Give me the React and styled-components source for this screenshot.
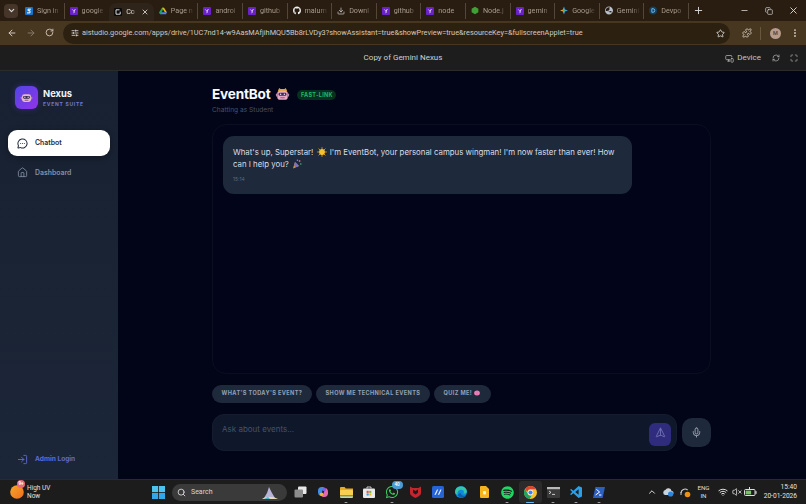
import React from 'react';
import styled, { createGlobalStyle } from 'styled-components';
import {
  ChevronDown, X, Plus, Minus, ArrowLeft, ArrowRight, RotateCw, Star, Puzzle, MoreVertical,
  SlidersHorizontal, MessageCircleMore, House, Mic, Send, Search, ChevronUp, Wifi, VolumeX, LogIn, Download,
  MonitorSmartphone, Maximize, RefreshCw, Copy
} from 'lucide-react';
import { FaGithub, FaSpotify, FaWhatsapp, FaGlobeAsia } from 'react-icons/fa';

const Global = createGlobalStyle`
  html, body { margin: 0; padding: 0; background: #020417; }
  #root { width: 806px; height: 504px; overflow: hidden; }
  * { box-sizing: border-box; }
`;

const Page = styled.div`
  width: 806px; height: 504px; display: flex; flex-direction: column;
  font-family: Inter, "Liberation Sans", sans-serif; overflow: hidden;
`;

/* ---------- browser chrome ---------- */
const TabStrip = styled.div`
  height: 21px; background: #291c10; display: flex; align-items: center; padding-left: 4px; flex: none;
`;
const TabMenu = styled.div`
  width: 14px; height: 14px; border-radius: 4px; background: #46362a; color: #ddd; margin-right: 2px;
  display: flex; align-items: center; justify-content: center; flex: none;
`;
const Tab = styled.div`
  width: 44.6px; height: ${p => (p.$active ? '18px' : '16px')}; align-self: ${p => (p.$active ? 'flex-end' : 'center')};
  display: flex; align-items: center; gap: 4px; padding-left: 5px; flex: none; position: relative;
  color: ${p => (p.$active ? '#e0dcd6' : '#a89c8e')};
  background: ${p => (p.$active ? '#2f241a' : 'transparent')};
  border-radius: ${p => (p.$active ? '7px 7px 0 0' : '0')};
  border-right: ${p => (p.$sep ? '1px solid #54473a' : '1px solid transparent')};
`;
const TabTitle = styled.span`
  font: 400 7.2px/10px Roboto, sans-serif; white-space: nowrap; overflow: hidden; flex: 1; min-width: 0;
  -webkit-mask-image: linear-gradient(90deg, #000 55%, transparent 90%);
  mask-image: linear-gradient(90deg, #000 55%, transparent 90%);
`;
const TabIconSlot = styled.span`
  width: 8px; height: 8px; display: flex; flex: none; align-items: center; justify-content: center;
`;
const NewTab = styled.div`
  color: #ddd; margin-left: 4px; display: flex;
`;
const WindowControls = styled.div`
  margin-left: auto; display: flex; align-items: center; color: #ddd;
`;
const WindowButton = styled.span`
  width: 24.5px; display: flex; justify-content: center;
`;
const Toolbar = styled.div`
  height: 24px; background: #483720; display: flex; align-items: center; flex: none; color: #cfc6ba;
`;
const NavIcons = styled.div`
  width: 63px; display: flex; justify-content: space-around; padding: 0 4px 0 2px; flex: none;
`;
const NavIcon = styled.span`
  display: flex; opacity: ${p => (p.$dim ? 0.45 : 1)};
`;
const Omnibox = styled.div`
  width: 667px; height: 21px; border-radius: 11px; background: #2c2011; display: flex; align-items: center;
  padding: 0 5px 0 4px; flex: none;
`;
const SiteChip = styled.span`
  width: 15px; display: flex; justify-content: center; color: #ddd;
`;
const Url = styled.span`
  font: 400 7.35px/12px Roboto, sans-serif; color: #d0cac2; white-space: nowrap; flex: 1;
`;
const ToolbarEnd = styled.div`
  flex: 1; display: flex; align-items: center; padding-left: 12px;
`;
const ToolbarDivider = styled.span`
  width: 1px; height: 13px; background: #68563d; margin: 0 9px 0 8px;
`;
const Avatar = styled.span`
  width: 11px; height: 11px; border-radius: 50%; background: #b89a8e; color: #4d3a33;
  font: 500 5.5px/11px Roboto, sans-serif; text-align: center; margin-right: 9px;
`;

/* ---------- AI Studio header ---------- */
const StudioBar = styled.div`
  height: 26px; background: #1d1d1d; flex: none; position: relative; display: flex; align-items: center;
  justify-content: center; border-bottom: 1px solid #2b2b2b;
`;
const StudioTitle = styled.span`
  font: 400 8px/12px Roboto, sans-serif; color: #d0d0d0;
`;
const StudioActions = styled.div`
  position: absolute; right: 8px; top: 7px; display: flex; align-items: center; color: #b5b5b5;
`;
const DeviceLabel = styled.span`
  font: 400 8px/12px Roboto, sans-serif; color: #c4c4c4; margin: 0 11px 0 3px;
`;

/* ---------- app ---------- */
const AppBody = styled.div`
  flex: 1; min-height: 0; display: flex; background: #020417;
`;
const Sidebar = styled.aside`
  width: 118px; flex: none; background: linear-gradient(180deg, #182131 0%, #1b2638 100%);
  display: flex; flex-direction: column; padding: 15px 8px 7px;
`;
const Brand = styled.div`
  display: flex; align-items: center; gap: 5px; padding-left: 7px; margin-bottom: 21px;
`;
const BrandLogo = styled.div`
  width: 23px; height: 23px; border-radius: 6px; background: linear-gradient(135deg, #4f46e5, #9333ea);
  display: flex; align-items: center; justify-content: center; box-shadow: 0 0 6px rgba(99,70,229,.35);
`;
const BrandName = styled.div`
  font: 700 9.4px/12px Inter, sans-serif; color: #f1f5f9;
`;
const BrandSub = styled.div`
  font: 700 5px/7px Inter, sans-serif; letter-spacing: .72px; color: #6d78d8; margin-top: 1px;
`;
const NavItem = styled.div`
  height: 26px; border-radius: 9px; display: flex; align-items: center; gap: 7px; padding-left: 9px;
  font: 600 6.9px/10px Inter, sans-serif;
  background: ${p => (p.$active ? '#ffffff' : 'transparent')};
  color: ${p => (p.$active ? '#1e293b' : '#8491a6')};
  margin-bottom: 3.5px;
  box-shadow: ${p => (p.$active ? '0 2px 6px rgba(0,0,0,.3)' : 'none')};
`;
const AdminLink = styled(NavItem)`
  color: #5f6bd0; margin-top: auto; margin-bottom: 0; font-weight: 700; font-size: 6.6px;
`;
const Main = styled.main`
  flex: 1; min-width: 0; display: flex; flex-direction: column; padding: 15px 95px 29px 94px;
`;
const TitleRow = styled.div`
  display: flex; align-items: center; height: 17px;
`;
const Title = styled.h1`
  font: 700 13.6px/17px Inter, sans-serif; color: #f8fafc; margin: 0 5px 0 0; letter-spacing: -.2px;
`;
const Badge = styled.span`
  margin-left: 7px; height: 10px; width: 39px; border-radius: 5px; background: #06301f; color: #22b866;
  font: 700 5.5px/10px Inter, sans-serif; letter-spacing: .3px; text-align: center; white-space: nowrap;
`;
const Subtitle = styled.div`
  font: 400 6.6px/9px Inter, sans-serif; color: #46536a; margin-top: 3px; margin-bottom: 9px;
`;
const ChatPanel = styled.section`
  height: 250px; border: 1px solid #0a0e20; border-radius: 14px; padding: 11px 10px; background: #02051a; flex: none;
`;
const Bubble = styled.div`
  width: 409px; height: 58px; background: #1e293b; border-radius: 11px; padding: 10px 10px;
`;
const BubbleText = styled.p`
  margin: 0; font: 400 7.85px/12.4px Inter, sans-serif; color: #d9dfe8;
`;
const Emoji = styled.svg`
  width: 10px; height: 10px; display: inline-block; vertical-align: -2px; margin: 0 1px;
`;
const Time = styled.div`
  font: 400 5px/7px Inter, sans-serif; color: #5b6a80; margin-top: 5px;
`;
const ChipRow = styled.div`
  display: flex; gap: 4px; margin-top: 11px;
`;
const Chip = styled.div`
  height: 17.5px; border-radius: 9px; background: #1e293b; color: #93a0b4;
  font: 700 5.6px/17.5px Inter, sans-serif; letter-spacing: .38px; padding: 0 9.6px; white-space: nowrap;
`;
const Composer = styled.div`
  display: flex; align-items: center; gap: 5px; margin-top: 11px;
`;
const InputBox = styled.div`
  width: 465px; height: 37px; background: #0f172a; border: 1px solid #141c2e; border-radius: 12px;
  display: flex; padding: 8px 5px 5px 9px; justify-content: space-between;
`;
const Placeholder = styled.span`
  font: 400 8px/12px Inter, sans-serif; color: #465268;
`;
const SendButton = styled.div`
  width: 22px; height: 23px; border-radius: 6px; background: #2f2c7e; color: #7475b4;
  display: flex; align-items: center; justify-content: center;
`;
const MicButton = styled.div`
  width: 29px; height: 29px; border-radius: 10px; background: #1e293b; color: #a0a9b8;
  display: flex; align-items: center; justify-content: center;
`;

/* ---------- taskbar ---------- */
const Taskbar = styled.footer`
  height: 25px; flex: none; background: #1c1c1c; display: flex; align-items: center; color: #ddd;
  border-top: 1px solid #2a2a2a;
`;
const Weather = styled.div`
  width: 147px; flex: none; display: flex; align-items: center; gap: 3px; padding-left: 10px; position: relative;
`;
const WeatherBadge = styled.span`
  position: absolute; left: 17px; top: -4px; width: 8px; height: 8px; border-radius: 50%; background: #e8697d;
  font: 700 4.5px/8px Roboto, sans-serif; text-align: center; color: #fff;
`;
const WeatherText = styled.div`
  font: 400 6.5px/8.5px Roboto, sans-serif; color: #e2e2e2;
`;
const TaskSlot = styled.div`
  width: ${p => p.$w || 23}px; height: 22px; display: flex; align-items: center; justify-content: center; flex: none;
  position: relative; border-radius: 3px; background: ${p => (p.$on ? '#2b2b2b' : 'transparent')};
`;
const RunDot = styled.span`
  position: absolute; bottom: 0; left: 50%; transform: translateX(-50%); height: 1.5px; border-radius: 1px;
  width: ${p => (p.$on ? 8 : 3)}px; background: ${p => (p.$on ? '#64b5f6' : '#9a9a9a')};
`;
const CountBadge = styled.span`
  position: absolute; right: 1px; top: 0; width: 11px; height: 7.5px; border-radius: 4px; background: #4a9bd4;
  color: #fff; font: 500 4.6px/7.5px Roboto, sans-serif; text-align: center;
`;
const SearchPill = styled.div`
  width: 115px; height: 17px; border-radius: 9px; background: #3a3a3a; display: flex; align-items: center; flex: none;
  padding: 0 5px 0 5px; gap: 5px; margin: 0 1.5px 0 2px; color: #d8d8d8; font: 400 7px/10px Roboto, sans-serif;
`;
const PillArt = styled.svg`
  margin-left: auto; width: 20px; height: 17px; margin-right: 2px;
`;
const Tray = styled.div`
  margin-left: auto; display: flex; align-items: center; padding-right: 9px;
`;
const TrayIcon = styled.span`
  width: ${p => p.$w || 15}px; display: flex; justify-content: center; color: #ddd; flex: none;
`;
const Lang = styled.div`
  font: 400 6.2px/8.5px Roboto, sans-serif; text-align: center; width: 21px; margin: 0 2px 0 0; color: #ddd;
`;
const Clock = styled.div`
  font: 400 6.6px/9px Roboto, sans-serif; text-align: right; margin-left: 2px; color: #e4e4e4; width: 38px;
`;

/* ---------- drawn icons ---------- */
const YIcon = () => (
  <svg width="8" height="8" viewBox="0 0 8 8"><rect width="8" height="8" rx="1" fill="#6b21c8" />
    <path d="M1.6 2.2 3.6 4v2.4l1-1V3.8l1.6-1.8-1.6.6-1 .9-1-1z" fill="#e9e4f7" /></svg>
);
const SIcon = () => (
  <svg width="8" height="8" viewBox="0 0 8 8"><rect width="8" height="8" rx="1" fill="#1673c9" />
    <path d="M6 2.2H3v1.5h2v2.2H2" fill="none" stroke="#fff" strokeWidth="1" /></svg>
);
const StudioIcon = () => (
  <svg width="8" height="8" viewBox="0 0 8 8"><rect width="8" height="8" rx="1" fill="#0b0b0b" />
    <path d="M5.5 1.8H2v4.4h4.2V3.6" fill="none" stroke="#eee" strokeWidth=".9" /></svg>
);
const DriveIcon = () => (
  <svg width="8" height="8" viewBox="0 0 8 8"><path d="M3 .8h2L2 6.4 1 7.2 0 5.4z" fill="#1fa463" />
    <path d="M3 .8h2l3 4.6H6z" fill="#f4b400" /><path d="M1 7.2l1.2-1.9H8L7 7.2z" fill="#4285f4" /></svg>
);
const NodeIcon = () => (
  <svg width="9" height="9" viewBox="0 0 9 9"><path d="M4.5.3 8.3 2.4v4.2L4.5 8.7.7 6.6V2.4z" fill="#3fa037" /></svg>
);
const GoogleSpark = () => (
  <svg width="9" height="9" viewBox="0 0 9 9"><path d="M4.5 0 5.6 3.4 9 4.5 5.6 5.6 4.5 9z" fill="#4aa3e8" />
    <path d="M4.5 0 3.4 3.4 0 4.5 3.4 5.6 4.5 9z" fill="#e8a33a" /><circle cx="4.5" cy="4.5" r="1.2" fill="#3fb27f" /></svg>
);
const DevpostIcon = () => (
  <svg width="9" height="9" viewBox="0 0 9 9"><circle cx="4.5" cy="4.5" r="4.5" fill="#123f63" />
    <path d="M3.2 2.5h1.3a2 2 0 0 1 0 4H3.2z" fill="none" stroke="#7cc7ee" strokeWidth="1" /></svg>
);
const RobotFace = ({ size = 14, hat = true }) => (
  <svg width={size} height={size} viewBox="0 0 16 16">
    {hat && <path d="M3 4.2 4.5 1l1.4 1.2h4.2L11.5 1 13 4.2z" fill="#e2a531" />}
    <rect x="2.4" y="4" width="11.2" height="9.6" rx="3" fill={hat ? '#e9a9c4' : '#e7b8c8'} />
    <rect x="1" y="7" width="1.6" height="3.2" rx=".7" fill="#b885a8" /><rect x="13.4" y="7" width="1.6" height="3.2" rx=".7" fill="#b885a8" />
    <rect x="3.8" y="6" width="8.4" height="3.4" rx="1.4" fill="#3b2a56" />
    <circle cx="6" cy="7.7" r=".8" fill="#e7e3f5" /><circle cx="10" cy="7.7" r=".8" fill="#e7e3f5" />
    <rect x="5.5" y="10.8" width="5" height="1.2" rx=".6" fill="#8b5c86" />
  </svg>
);
const SunEmoji = () => (
  <Emoji viewBox="0 0 10 10"><g stroke="#d9a520" strokeWidth=".9"><path d="M5 .2v9.6M.2 5h9.6M1.6 1.6l6.8 6.8M8.4 1.6 1.6 8.4" /></g>
    <circle cx="5" cy="5" r="2.9" fill="#f2c230" /></Emoji>
);
const PartyEmoji = () => (
  <Emoji viewBox="0 0 10 10"><path d="M1 9.4 3 3l4 4z" fill="#d99a3a" /><path d="M2 6.4 3 3l4 4-3.2 1.2z" fill="#7c6fc7" />
    <circle cx="7.6" cy="2" r=".9" fill="#e0607e" /><circle cx="5.4" cy="1.2" r=".7" fill="#5aa6e0" /><circle cx="8.8" cy="5" r=".8" fill="#58b36a" /></Emoji>
);
const BrainEmoji = () => (
  <Emoji viewBox="0 0 10 10" style={{ width: 6, height: 6, marginLeft: 2, verticalAlign: -0.5 }}>
    <ellipse cx="5" cy="5" rx="4.8" ry="4.2" fill="#ee7fb8" /><path d="M5 1.2v7.4" stroke="#c75c97" strokeWidth=".6" />
  </Emoji>
);
const WinLogo = () => (
  <svg width="13" height="13" viewBox="0 0 13 13"><g fill="#4cc2f1"><rect width="6.1" height="6.1" /><rect x="6.9" width="6.1" height="6.1" />
    <rect y="6.9" width="6.1" height="6.1" fill="#32a6e6" /><rect x="6.9" y="6.9" width="6.1" height="6.1" fill="#32a6e6" /></g></svg>
);
const TaskView = () => (
  <svg width="13" height="12" viewBox="0 0 13 12"><rect x="4" y="0.5" width="8.5" height="7.5" rx="1" fill="#e8e8e8" /><rect x="0.5" y="3.5" width="8.5" height="8" rx="1" fill="#8c8c8c" /></svg>
);
const CopilotIcon = () => (
  <svg width="12" height="12" viewBox="0 0 12 12"><path d="M1 4.5C1 2 3 1 4.6 1H7L5 6 3.6 9.6C2 10 1 8 1 6z" fill="#3f8ee6" />
    <path d="M11 7.5C11 10 9 11 7.4 11H5l2-5 1.4-3.6C10 2 11 4 11 6z" fill="#e46ab0" /><circle cx="7.2" cy="3.4" r="1.8" fill="#8a5be6" /><circle cx="4.6" cy="8.4" r="1.8" fill="#f1b23b" /></svg>
);
const FolderIcon = () => (
  <svg width="13" height="11" viewBox="0 0 13 11"><path d="M0 1.2C0 .5.5 0 1.2 0h3.4l1.2 1.4H13V4H0z" fill="#e6a91f" /><rect y="3" width="13" height="8" rx="1" fill="#f8cf4e" /><rect y="8" width="13" height="1.4" fill="#3aa0dc" /></svg>
);
const StoreIcon = () => (
  <svg width="12" height="12" viewBox="0 0 12 12"><rect y="2.5" width="12" height="9.5" rx="1" fill="#e9e9e9" /><path d="M4 2.5V1h4v1.5" fill="none" stroke="#ccc" />
    <rect x="3.6" y="4.8" width="2.1" height="2.1" fill="#e0533c" /><rect x="6.2" y="4.8" width="2.1" height="2.1" fill="#79b938" /><rect x="3.6" y="7.4" width="2.1" height="2.1" fill="#2d9be0" /><rect x="6.2" y="7.4" width="2.1" height="2.1" fill="#f3b723" /></svg>
);
const McAfee = () => (
  <svg width="11" height="12" viewBox="0 0 11 12"><path d="M0 .5 2.6 2h5.8L11 .5V7c0 2.4-3.4 4-5.5 5C3.4 11 0 9.4 0 7z" fill="#c1272d" /><path d="M3 3.6 5.5 5 8 3.6v3.2L5.5 8.4 3 6.8z" fill="#1c1c1c" /></svg>
);
const PinIcon = () => (
  <svg width="12" height="12" viewBox="0 0 12 12"><rect width="12" height="12" rx="1.5" fill="#2563d6" /><path d="M2.4 8.8 5 3.4h1.2L3.8 8.8zm3.4 0 2.6-5.4h1.2L7.2 8.8z" fill="#e7eefc" /></svg>
);
const EdgeIcon = () => (
  <svg width="12" height="12" viewBox="0 0 12 12"><circle cx="6" cy="6" r="6" fill="#0f8ad8" /><path d="M0 6a6 6 0 0 1 11.8-1c.4 2-1.6 3-3.4 2.4C10 5 7.5 3.2 5 4 2.8 4.7 2 7 2.8 9 1 8.2 0 7.2 0 6z" fill="#35c6a4" />
    <path d="M3 9.2C3.8 11 6 12 8 11.6c1.4-.3 2.6-1.2 3.2-2.4-2.4 1.2-5 .6-5.6-2.2C4 7.4 3 8 3 9.2z" fill="#0a5fa8" /></svg>
);
const KeepIcon = () => (
  <svg width="9" height="12" viewBox="0 0 9 12"><path d="M1 0h5l3 3v8a1 1 0 0 1-1 1H1a1 1 0 0 1-1-1V1a1 1 0 0 1 1-1z" fill="#f6b51e" /><rect x="3" y="5" width="3" height="3.5" rx="1" fill="#fff4cf" /></svg>
);
const ChromeIcon = () => (
  <svg width="13" height="13" viewBox="0 0 13 13"><circle cx="6.5" cy="6.5" r="6.5" fill="#f6c32c" />
    <path d="M6.5 0a6.5 6.5 0 0 1 5.6 3.3H6.5a3.2 3.2 0 0 0-3.1 2.4L1.1 2.9A6.5 6.5 0 0 1 6.5 0z" fill="#dc4437" />
    <path d="M1.1 2.9 4 8.3a3.2 3.2 0 0 0 3.6 1.4L5.6 13A6.5 6.5 0 0 1 1.1 2.9z" fill="#1fa463" />
    <circle cx="6.5" cy="6.5" r="2.7" fill="#fff" /><circle cx="6.5" cy="6.5" r="2.1" fill="#3d83f0" /></svg>
);
const TerminalIcon = () => (
  <svg width="13" height="11" viewBox="0 0 13 11"><rect width="13" height="11" rx="1" fill="#3a3a3a" /><rect width="13" height="2.2" fill="#b8b8b8" /><path d="M2 4l2 1.4L2 6.8M5 7.4h3" stroke="#eee" strokeWidth=".8" fill="none" /></svg>
);
const VsCode = () => (
  <svg width="12" height="12" viewBox="0 0 12 12"><path d="M8.6 0 12 1.6v8.8L8.6 12 3.4 7.2 1.2 9 0 8.2 2.2 6 0 3.8 1.2 3l2.2 1.8zM8.6 3.2 5.2 6l3.4 2.8z" fill="#2b9fe8" /></svg>
);
const PowerShell = () => (
  <svg width="12" height="11" viewBox="0 0 12 11"><path d="M2.4 0H12L9.6 11H0z" fill="#2c5fc0" /><path d="M3.4 2.4 6.6 5 2.6 8" stroke="#fff" strokeWidth="1" fill="none" /><path d="M6 8h2.4" stroke="#fff" strokeWidth="1" /></svg>
);
const OneDrive = () => (
  <svg width="12" height="10" viewBox="0 0 12 10"><path d="M3 8a2.6 2.6 0 0 1 .3-5A3.4 3.4 0 0 1 9.6 4 2 2 0 0 1 9.5 8z" fill="#c9d3dc" /><circle cx="8.6" cy="7" r="2.6" fill="#2a86e0" /></svg>
);
const SyncBadge = () => (
  <svg width="12" height="12" viewBox="0 0 12 12"><path d="M2 7a4 4 0 0 1 6.6-3" fill="none" stroke="#cfcfcf" strokeWidth="1.1" /><path d="M2 9V6" stroke="#cfcfcf" strokeWidth="1" /><circle cx="8.5" cy="8.5" r="2.8" fill="#ee8f1c" /></svg>
);
const Battery = () => (
  <svg width="13" height="10" viewBox="0 0 13 10"><rect x=".5" y="2.5" width="10.5" height="6" rx="1" fill="none" stroke="#ddd" /><rect x="1.6" y="3.6" width="5.5" height="3.8" fill="#78c06a" /><rect x="11.4" y="4.2" width="1.2" height="2.6" fill="#ddd" /><path d="M5.5 0v3" stroke="#ddd" /></svg>
);
const WeatherIcon = () => (
  <svg width="14" height="14" viewBox="0 0 14 14"><defs><linearGradient id="uv" x1="0" y1="0" x2="1" y2="1"><stop offset="0" stopColor="#f7a72a" /><stop offset="1" stopColor="#ef6d1e" /></linearGradient></defs><circle cx="7" cy="7" r="6.8" fill="url(#uv)" /></svg>
);

const tabs = [
  { title: 'Sign in', icon: <SIcon />, sep: true },
  { title: 'google', icon: <YIcon /> },
  { title: 'Co', icon: <StudioIcon />, active: true },
  { title: 'Page n', icon: <DriveIcon />, sep: true },
  { title: 'androi', icon: <YIcon />, sep: true },
  { title: 'github', icon: <YIcon />, sep: true },
  { title: 'malum', icon: <FaGithub size={9} color="#eee" />, sep: true },
  { title: 'Downl', icon: <Download size={8} color="#ddd" />, sep: true },
  { title: 'github', icon: <YIcon />, sep: true },
  { title: 'node', icon: <YIcon />, sep: true },
  { title: 'Node.j', icon: <NodeIcon />, sep: true },
  { title: 'gemin', icon: <YIcon />, sep: true },
  { title: 'Google', icon: <GoogleSpark />, sep: true },
  { title: 'Gemini', icon: <FaGlobeAsia size={9} color="#b9c2cc" />, sep: true },
  { title: 'Devpo', icon: <DevpostIcon />, sep: true },
];

const taskIcons = [
  { key: 'view', icon: <TaskView /> },
  { key: 'copilot', icon: <CopilotIcon /> },
  { key: 'files', icon: <FolderIcon />, run: true },
  { key: 'store', icon: <StoreIcon /> },
  { key: 'wa', icon: <FaWhatsapp size={14} color="#3ecf5e" />, run: true, count: '40' },
  { key: 'mcafee', icon: <McAfee /> },
  { key: 'pin', icon: <PinIcon /> },
  { key: 'edge', icon: <EdgeIcon /> },
  { key: 'keep', icon: <KeepIcon /> },
  { key: 'spotify', icon: <FaSpotify size={13} color="#1ed760" />, run: true },
  { key: 'chrome', icon: <ChromeIcon />, on: true },
  { key: 'term', icon: <TerminalIcon />, run: true },
  { key: 'code', icon: <VsCode />, run: true },
  { key: 'ps', icon: <PowerShell />, run: true },
];

export default function App() {
  return (
    <Page>
      <Global />
      <TabStrip>
        <TabMenu><ChevronDown size={9} strokeWidth={3} /></TabMenu>
        {tabs.map((t, i) => (
          <Tab key={i} $active={t.active} $sep={t.sep}>
            <TabIconSlot>{t.icon}</TabIconSlot>
            <TabTitle>{t.title}</TabTitle>
            {t.active && <X size={8} strokeWidth={2.5} style={{ marginRight: 4, flex: 'none' }} />}
          </Tab>
        ))}
        <NewTab><Plus size={11} /></NewTab>
        <WindowControls>
          <WindowButton><Minus size={9} /></WindowButton>
          <WindowButton><Copy size={8} /></WindowButton>
          <WindowButton><X size={11} /></WindowButton>
        </WindowControls>
      </TabStrip>
      <Toolbar>
        <NavIcons>
          <NavIcon><ArrowLeft size={10} strokeWidth={2.4} /></NavIcon>
          <NavIcon $dim><ArrowRight size={10} strokeWidth={2.4} /></NavIcon>
          <NavIcon><RotateCw size={9} strokeWidth={2.4} /></NavIcon>
        </NavIcons>
        <Omnibox>
          <SiteChip><SlidersHorizontal size={8} strokeWidth={2.4} /></SiteChip>
          <Url>aistudio.google.com/apps/drive/1UC7nd14-w9AasMAfjihMQU5Bb8rLVDy3?showAssistant=true&amp;showPreview=true&amp;resourceKey=&amp;fullscreenApplet=true</Url>
          <Star size={9} color="#ddd" strokeWidth={2.2} />
        </Omnibox>
        <ToolbarEnd>
          <Puzzle size={10} strokeWidth={2.2} />
          <ToolbarDivider />
          <Avatar>M</Avatar>
          <MoreVertical size={10} strokeWidth={2.6} />
        </ToolbarEnd>
      </Toolbar>
      <StudioBar>
        <StudioTitle>Copy of Gemini Nexus</StudioTitle>
        <StudioActions>
          <MonitorSmartphone size={9} />
          <DeviceLabel>Device</DeviceLabel>
          <RefreshCw size={8} style={{ marginRight: 10 }} />
          <Maximize size={8} />
        </StudioActions>
      </StudioBar>
      <AppBody>
        <Sidebar>
          <Brand>
            <BrandLogo><RobotFace size={13} hat={false} /></BrandLogo>
            <div>
              <BrandName>Nexus</BrandName>
              <BrandSub>EVENT SUITE</BrandSub>
            </div>
          </Brand>
          <NavItem $active><MessageCircleMore size={11} strokeWidth={2.2} />Chatbot</NavItem>
          <NavItem><House size={11} strokeWidth={1.8} />Dashboard</NavItem>
          <AdminLink><LogIn size={11} strokeWidth={2} />Admin Login</AdminLink>
        </Sidebar>
        <Main>
          <TitleRow>
            <Title>EventBot</Title>
            <RobotFace size={15} />
            <Badge>FAST-LINK</Badge>
          </TitleRow>
          <Subtitle>Chatting as Student</Subtitle>
          <ChatPanel>
            <Bubble>
              <BubbleText>
                What's up, Superstar! <SunEmoji /> I'm EventBot, your personal campus wingman! I'm now faster than ever! How can I help you? <PartyEmoji />
              </BubbleText>
              <Time>15:14</Time>
            </Bubble>
          </ChatPanel>
          <ChipRow>
            <Chip>WHAT'S TODAY'S EVENT?</Chip>
            <Chip>SHOW ME TECHNICAL EVENTS</Chip>
            <Chip>QUIZ ME!<BrainEmoji /></Chip>
          </ChipRow>
          <Composer>
            <InputBox>
              <Placeholder>Ask about events...</Placeholder>
              <SendButton><Send size={11} strokeWidth={1.8} style={{ transform: 'rotate(-45deg)' }} /></SendButton>
            </InputBox>
            <MicButton><Mic size={11} strokeWidth={2} /></MicButton>
          </Composer>
        </Main>
      </AppBody>
      <Taskbar>
        <Weather>
          <WeatherIcon />
          <WeatherBadge>9+</WeatherBadge>
          <WeatherText>High UV<br />Now</WeatherText>
        </Weather>
        <TaskSlot><WinLogo /></TaskSlot>
        <SearchPill>
          <Search size={9} strokeWidth={2.4} />
          Search
          <PillArt viewBox="0 0 20 17">
            <path d="M9 3l3 6 3 5H4l3-5z" fill="#b7b4d8" /><path d="M2 15c4-3 10-3 16 0z" fill="#e6d9b8" /><path d="M4 15l4-2 2 2z" fill="#43b9c7" />
          </PillArt>
        </SearchPill>
        {taskIcons.map(t => (
          <TaskSlot key={t.key} $on={t.on}>
            {t.icon}
            {t.count && <CountBadge>{t.count}</CountBadge>}
            {(t.run || t.on) && <RunDot $on={t.on} />}
          </TaskSlot>
        ))}
        <Tray>
          <TrayIcon><ChevronUp size={10} strokeWidth={2.4} /></TrayIcon>
          <TrayIcon $w={18}><OneDrive /></TrayIcon>
          <TrayIcon $w={16}><SyncBadge /></TrayIcon>
          <Lang>ENG<br />IN</Lang>
          <TrayIcon $w={14}><Wifi size={10} strokeWidth={2.4} /></TrayIcon>
          <TrayIcon $w={13}><VolumeX size={10} /></TrayIcon>
          <TrayIcon $w={14}><Battery /></TrayIcon>
          <Clock>15:40<br />20-01-2026</Clock>
        </Tray>
      </Taskbar>
    </Page>
  );
}
